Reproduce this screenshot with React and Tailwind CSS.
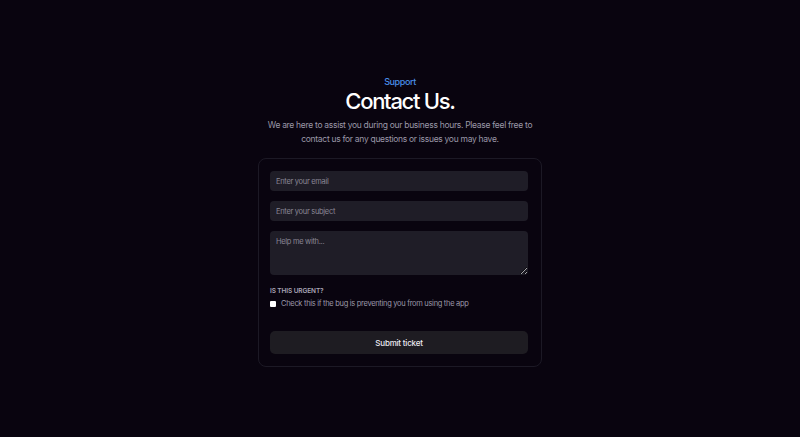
import React from "react";

const App = () => {
  return (
    <div
      className="h-[437px] w-full bg-[#09040f] flex items-center justify-center pt-[6px]"
      style={{ fontFamily: "Inter, 'Noto Sans', sans-serif" }}
    >
      <div className="flex flex-col items-center">
        <p className="text-[9px] font-medium text-[#4a8fe8] leading-[12px] tracking-[-0.4px]">Support</p>
        <h1 className="mt-[1px] text-[22px] font-medium text-white leading-[24px] tracking-[-1.3px]">
          Contact Us.
        </h1>
        <p className="mt-[6px] w-[290px] text-center text-[8.5px] leading-[13.5px] tracking-[-0.3px] text-[#9b98a8]">
          We are here to assist you during our business hours. Please feel free to contact us for any questions or issues you may have.
        </p>
        <form className="mt-[12px] w-[284px] rounded-[8px] border border-[#1c1925] pl-[11px] pr-[13px] pt-[12px] pb-[12px] flex flex-col">
          <input
            type="email"
            placeholder="Enter your email"
            className="h-[20px] w-full rounded-[4px] bg-[#1f1d27] px-[6px] text-[7.5px] tracking-[-0.3px] text-white placeholder:text-[#8a8796] outline-none"
          />
          <input
            type="text"
            placeholder="Enter your subject"
            className="mt-[10px] h-[20px] w-full rounded-[4px] bg-[#1f1d27] px-[6px] text-[7.5px] tracking-[-0.3px] text-white placeholder:text-[#8a8796] outline-none"
          />
          <textarea
            placeholder="Help me with..."
            className="mt-[10px] h-[44px] w-full rounded-[4px] bg-[#1f1d27] px-[6px] py-[5px] text-[7.5px] tracking-[-0.3px] text-white placeholder:text-[#8a8796] outline-none"
          />
          <p className="mt-[11px] text-[6.5px] font-semibold tracking-[-0.1px] text-[#a9a6b6] leading-[10px]">
            IS THIS URGENT?
          </p>
          <label className="mt-[3px] flex items-center gap-[5px] text-[7.5px] tracking-[-0.3px] text-[#9b98a8] leading-[10px]">
            <input
              type="checkbox"
              className="h-[6px] w-[6px] m-0 appearance-none rounded-[1px] bg-white"
            />
            <span>Check this if the bug is preventing you from using the app</span>
          </label>
          <button
            type="button"
            className="mt-[22px] h-[23px] w-full rounded-[5px] bg-[#1e1c22] text-[8px] tracking-[-0.2px] font-medium text-[#eceaf2]"
          >
            Submit ticket
          </button>
        </form>
      </div>
    </div>
  );
};

export default App;
